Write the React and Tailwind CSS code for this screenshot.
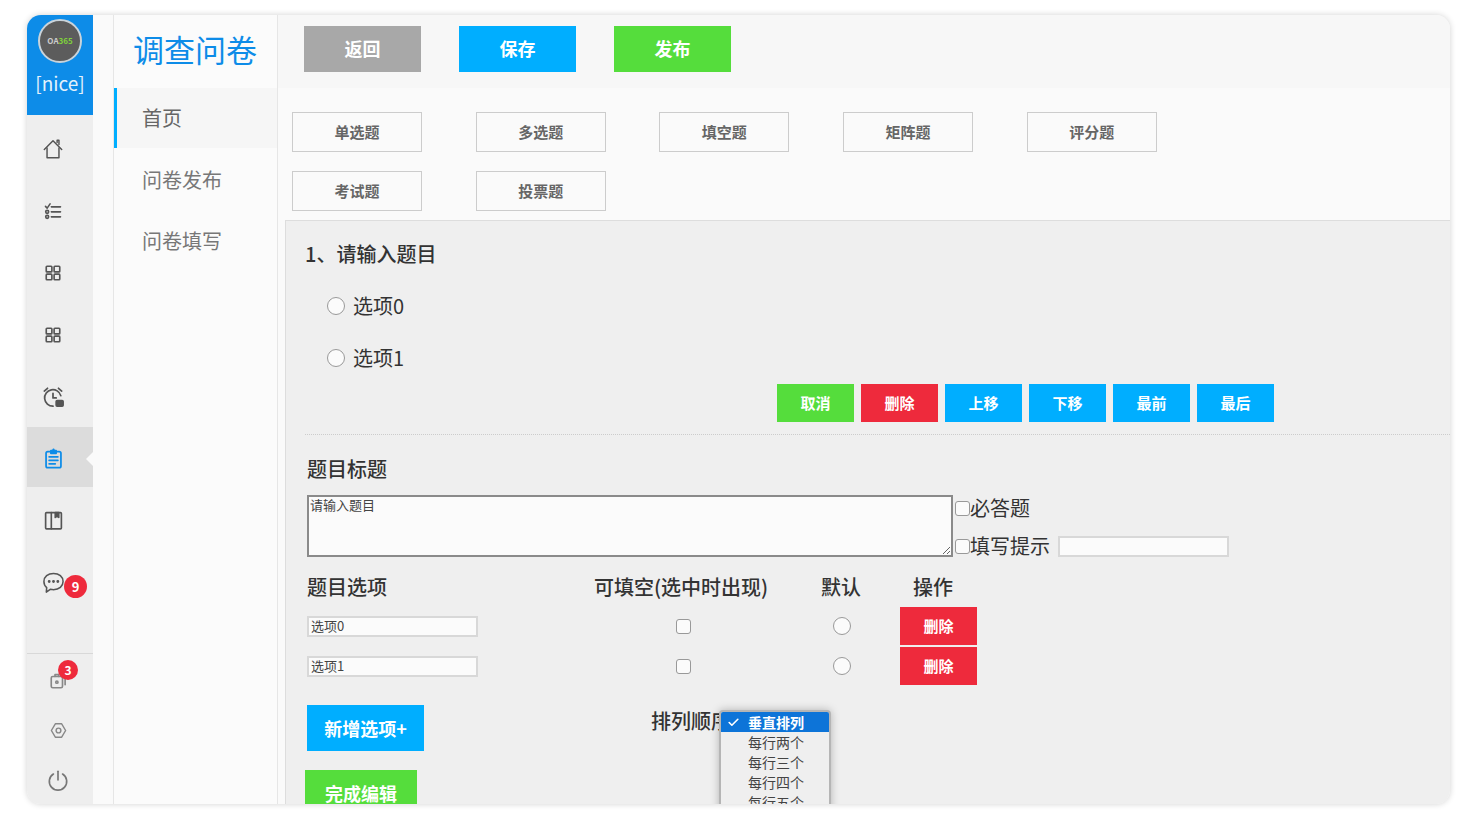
import React from 'react';
import { Check } from 'lucide-react';

const font = "font-['Noto_Sans_CJK_SC','Liberation_Sans',sans-serif]";

const Svg = ({ size = 22, className = '', sw = 1.6, children }) => (
  <svg width={size} height={size} viewBox="0 0 24 24" fill="none" stroke="currentColor" strokeWidth={sw} strokeLinecap="round" strokeLinejoin="round" className={className}>
    {children}
  </svg>
);

const HomeIcon = (p) => (
  <Svg {...p}>
    <path d="M2.5 12.5 12 3l9.5 9.5" />
    <path d="M5.5 11v10.5h13V11" />
    <path d="M16.5 5V2.5h2V7" />
  </Svg>
);

const ListIcon = (p) => (
  <Svg {...p} sw={1.9}>
    <path d="M3 6.5 5 8.5 8.5 3.5" />
    <circle cx="5" cy="13" r="1.8" />
    <circle cx="5" cy="19" r="1.8" />
    <path d="M10 7h11M10 13h11M10 19h11" />
  </Svg>
);

const GridIcon = (p) => (
  <Svg {...p} sw={2.2}>
    <rect x="3" y="3" width="7.5" height="7.5" rx="1" />
    <rect x="13.5" y="3" width="7.5" height="7.5" rx="1" />
    <rect x="3" y="13.5" width="7.5" height="7.5" rx="1" />
    <rect x="13.5" y="13.5" width="7.5" height="7.5" rx="1" />
  </Svg>
);

const AlarmIcon = (p) => (
  <Svg {...p} sw={1.9}>
    <path d="M20.5 10.5A9 9 0 1 0 12 22" />
    <path d="M2.5 5.5 6 2.5M18 2.5l3.5 3" />
    <path d="M12 8v5h3.5" />
    <rect x="15.5" y="16" width="7.5" height="6" rx="1" fill="currentColor" />
  </Svg>
);

const ClipboardIcon = (p) => (
  <Svg {...p} sw={2}>
    <rect x="3.5" y="4" width="17" height="18.5" rx="2" />
    <path d="M9 4.5V3h2l1-1.5L13 3h2v3H9z" fill="currentColor" />
    <path d="M7 10h10M7 14h10M7 18h7" />
  </Svg>
);

const BookIcon = (p) => (
  <Svg {...p} sw={1.9}>
    <rect x="3" y="3" width="18" height="18.5" rx="1" />
    <path d="M9.5 3v18.5" />
    <path d="M14 3h4v5.5l-2-1.5-2 1.5z" fill="currentColor" />
  </Svg>
);

const ChatIcon = (p) => (
  <Svg {...p} sw={1.6}>
    <path d="M12 2.5c5.800 0 10 3.600 10 8.500s-4.200 8.500-10 8.500c-1.200 0-2.300-.2-3.400-.4L4.500 22l.4-4.600C3 15.800 2 13.500 2 11c0-4.900 4.200-8.500 10-8.500z" />
    <circle cx="7.500" cy="11" r=".7" fill="currentColor" />
    <circle cx="12" cy="11" r=".7" fill="currentColor" />
    <circle cx="16.500" cy="11" r=".7" fill="currentColor" />
  </Svg>
);

const TrayIcon = (p) => (
  <Svg {...p} sw={2.2}>
    <rect x="3" y="6" width="15" height="15" rx="2" />
    <path d="M8 6V3.500h5V6" />
    <circle cx="10.500" cy="13.500" r="1.500" />
    <path d="M21.500 9v8" />
  </Svg>
);

const GearIcon = (p) => (
  <Svg {...p} sw={1.8}>
    <path d="M8 3.500h8l5 8.500-5 8.500H8L3 12z" />
    <circle cx="12" cy="12" r="3" />
  </Svg>
);

const PowerIcon = (p) => (
  <Svg {...p} sw={1.8}>
    <path d="M12 2.500V12" />
    <path d="M7 5.500a9.500 9.500 0 1 0 10 0" />
  </Svg>
);

const railIcons = [
  { id: 1, Icon: HomeIcon, size: 22 },
  { id: 2, Icon: ListIcon, size: 20 },
  { id: 3, Icon: GridIcon, size: 18 },
  { id: 4, Icon: GridIcon, size: 18 },
  { id: 5, Icon: AlarmIcon, size: 22 },
  { id: 6, Icon: ClipboardIcon, size: 21, active: true },
  { id: 7, Icon: BookIcon, size: 21 },
  { id: 8, Icon: ChatIcon, size: 23, badge: '9' }
];

const typesRowOne = ['单选题', '多选题', '填空题', '矩阵题', '评分题'];
const typesRowTwo = ['考试题', '投票题'];

const Badge = ({ value, className }) => (
  <span className={`absolute flex h-[23px] w-[23px] items-center justify-center rounded-full bg-[#ee2a3c] text-[13px] font-bold text-white ${className}`}>
    {value}
  </span>
);

const Rail = () => (
  <div className="flex w-[66px] shrink-0 flex-col bg-[#eeeeee]">
    <div className="flex h-[100px] flex-col items-center bg-[#0d8ce8] pt-[4px]">
      <div className="flex h-[44px] w-[44px] items-center justify-center rounded-full border-2 border-[#c9d3da] bg-[#5c5c5c] text-[8px] font-bold text-[#cccccc]">
        <span>OA<span className="text-[#7fd13b]">365</span></span>
      </div>
      <span className="mt-[8px] text-[19px] leading-[24px] text-[#e4f1fb]">[nice]</span>
    </div>
    <div className="flex flex-1 flex-col pt-[3px]">
      {railIcons.map(({ id, Icon, size, active, badge }) => (
        <div key={id} className={`relative flex shrink-0 items-center ${active ? 'mb-[2px] mt-[-1px] h-[60px] bg-[#dcdcdc] pt-[3px]' : 'h-[62px]'}`}>
          <span className={`flex w-[52px] justify-center ${active ? 'text-[#0d8ce8]' : 'text-[#555555]'}`}>
            <Icon size={size} />
          </span>
          {active && <span className="absolute right-0 top-[25px] h-0 w-0 border-y-[7px] border-r-[7px] border-y-transparent border-r-[#fafafa]" />}
          {badge && <Badge value={badge} className="left-[37px] top-[24px]" />}
        </div>
      ))}
    </div>
    <div className="flex h-[151px] shrink-0 flex-col items-center border-t border-[#d8d8d8] pr-[4px]">
      <div className="relative mt-[17px] flex h-[20px] w-[62px] items-center justify-center text-[#888888]">
        <TrayIcon size={18} />
        <span className="absolute left-[31px] top-[-11px] flex h-[20px] w-[20px] items-center justify-center rounded-full bg-[#ee2a3c] text-[12px] font-bold text-white">3</span>
      </div>
      <GearIcon size={19} className="mt-[30px] text-[#888888]" />
      <PowerIcon size={22} className="mt-[29px] text-[#777777]" />
    </div>
  </div>
);

const SubNav = () => (
  <div className="ml-[20px] flex w-[165px] shrink-0 flex-col border-x border-[#e6e6e6] bg-[#fbfbfb]">
    <div className="flex h-[73px] items-center pb-[6px] pl-[19px] text-[31px] leading-none text-[#0d8ce8]">调查问卷</div>
    <div className="flex h-[60px] items-center border-l-[3px] border-[#00aeff] bg-[#f6f6f6] pl-[25px] text-[20px] text-[#666666]">首页</div>
    <div className="flex h-[62px] items-center pl-[28px] pt-[2px] text-[20px] text-[#777777]">问卷发布</div>
    <div className="flex h-[62px] items-center pl-[28px] text-[20px] text-[#777777]">问卷填写</div>
  </div>
);

const TopButton = ({ color, children }) => (
  <button className={`h-[46px] w-[117px] text-[18px] font-bold text-white ${color}`}>{children}</button>
);

const TypeButton = ({ children }) => (
  <button className="h-[40px] w-[130px] border border-[#cccccc] bg-[#fafafa] text-[15px] font-bold text-[#666666]">{children}</button>
);

const ActionButton = ({ color, children, className = 'h-[38px] w-[77px]' }) => (
  <button className={`text-[15px] font-bold text-white ${color} ${className}`}>{children}</button>
);

const Radio = () => <span className="inline-block h-[18px] w-[18px] shrink-0 rounded-full border border-[#999999] bg-[#fbfbfb]" />;
const Checkbox = () => <span className="inline-block h-[15px] w-[15px] shrink-0 rounded-[3px] border border-[#999999] bg-[#fbfbfb]" />;

const OptionRow = ({ label }) => (
  <div className="flex h-[40px] items-center">
    <div className="flex h-[21px] w-[171px] items-center border-2 border-[#d8d8d8] bg-[#fbfbfb] pl-[2px] text-[13px] text-[#444444]">{label}</div>
    <div className="ml-[198px] flex w-[15px] justify-center"><Checkbox /></div>
    <div className="ml-[142px] flex"><Radio /></div>
    <ActionButton color="bg-[#ee2a3c]" className="ml-[49px] h-[38px] w-[77px]">删除</ActionButton>
  </div>
);

const Editor = () => (
  <div className="relative min-w-0 flex-1 overflow-hidden border-l border-t border-[#dddddd] bg-[#efefef] pl-[19px] text-[#333333]">
    <div className="flex h-[59px] items-center pt-[6px] text-[20px] font-medium">1、请输入题目</div>
    <div className="flex h-[52px] items-center pl-[22px] text-[20px]"><Radio /><span className="ml-[8px]">选项0</span></div>
    <div className="flex h-[52px] items-center pl-[22px] text-[20px]"><Radio /><span className="ml-[8px]">选项1</span></div>
    <div className="flex gap-[7px] pl-[472px]">
      <ActionButton color="bg-[#55dd3c]">取消</ActionButton>
      <ActionButton color="bg-[#ee2a3c]">删除</ActionButton>
      <ActionButton color="bg-[#00aeff]">上移</ActionButton>
      <ActionButton color="bg-[#00aeff]">下移</ActionButton>
      <ActionButton color="bg-[#00aeff]">最前</ActionButton>
      <ActionButton color="bg-[#00aeff]">最后</ActionButton>
    </div>
    <div className="mt-[12px] border-t border-dotted border-[#cccccc]" />
    <div className="pl-[2px]">
      <div className="flex h-[60px] items-center pt-[7px] text-[20px] font-medium">题目标题</div>
      <div className="flex">
        <textarea
          readOnly
          defaultValue="请输入题目"
          className="h-[62px] w-[646px] border-2 border-[#8a8a8a] bg-[#fbfbfb] pl-[1px] text-[13px] leading-[16px] text-[#444444]"
        />
        <div className="ml-[2px] text-[20px]">
          <div className="flex h-[26px] items-center"><Checkbox /><span>必答题</span></div>
          <div className="mt-[12px] flex h-[26px] items-center">
            <Checkbox /><span>填写提示</span>
            <span className="ml-[8px] h-[21px] w-[171px] border-2 border-[#d8d8d8] bg-[#fbfbfb]" />
          </div>
        </div>
      </div>
      <div className="mt-[12px] flex h-[32px] items-center text-[20px] font-medium">
        <span className="w-[287px]">题目选项</span>
        <span className="w-[227px]">可填空(选中时出现)</span>
        <span className="w-[92px]">默认</span>
        <span>操作</span>
      </div>
      <div className="mt-[3px]">
        <OptionRow label="选项0" />
        <OptionRow label="选项1" />
      </div>
      <div className="mt-[19px] flex items-start">
        <button className="h-[46px] w-[117px] bg-[#00aeff] text-[18px] font-bold text-white">新增选项+</button>
        <span className="ml-[227px] mt-[1px] text-[20px] font-medium">排列顺序</span>
      </div>
    </div>
    <button className="mt-[19px] h-[46px] w-[112px] bg-[#55dd3c] text-[18px] font-bold text-white">完成编辑</button>
    <div className="absolute left-[433px] top-[489px] w-[112px] overflow-hidden rounded-t-[4px] border-x-2 border-t-2 border-[#b5b5b5] bg-[#efefef] text-[14px] leading-[20px] text-[#444444] shadow-[0_0_8px_rgba(0,0,0,0.25)]">
      <div className="flex h-[20px] items-center bg-[#0d74d8] font-bold text-white">
        <Check size={13} strokeWidth={3} className="ml-[6px] mr-[8px]" />垂直排列
      </div>
      <div className="pl-[27px]">每行两个</div>
      <div className="pl-[27px]">每行三个</div>
      <div className="pl-[27px]">每行四个</div>
      <div className="pl-[27px]">每行五个</div>
    </div>
  </div>
);

const App = () => (
  <div className={`h-[819px] overflow-hidden bg-white pb-[15px] pl-[27px] pr-[25px] pt-[15px] ${font}`}>
    <div className="flex h-full overflow-hidden rounded-[14px] bg-[#fafafa] shadow-[0_0_6px_rgba(0,0,0,0.18)]">
      <Rail />
      <SubNav />
      <div className="flex min-w-0 flex-1 flex-col">
        <div className="flex h-[73px] shrink-0 items-center gap-[38px] bg-[#f7f7f7] pb-[6px] pl-[26px]">
          <TopButton color="bg-[#a8a8a8]">返回</TopButton>
          <TopButton color="bg-[#00aeff]">保存</TopButton>
          <TopButton color="bg-[#55dd3c]">发布</TopButton>
        </div>
        <div className="flex h-[132px] shrink-0 flex-col gap-[19px] pl-[14px] pt-[24px]">
          <div className="flex gap-[53.7px]">{typesRowOne.map((t) => <TypeButton key={t}>{t}</TypeButton>)}</div>
          <div className="flex gap-[53.7px]">{typesRowTwo.map((t) => <TypeButton key={t}>{t}</TypeButton>)}</div>
        </div>
        <div className="flex min-h-0 flex-1 pl-[7px]">
          <Editor />
        </div>
      </div>
    </div>
  </div>
);

export default App;
